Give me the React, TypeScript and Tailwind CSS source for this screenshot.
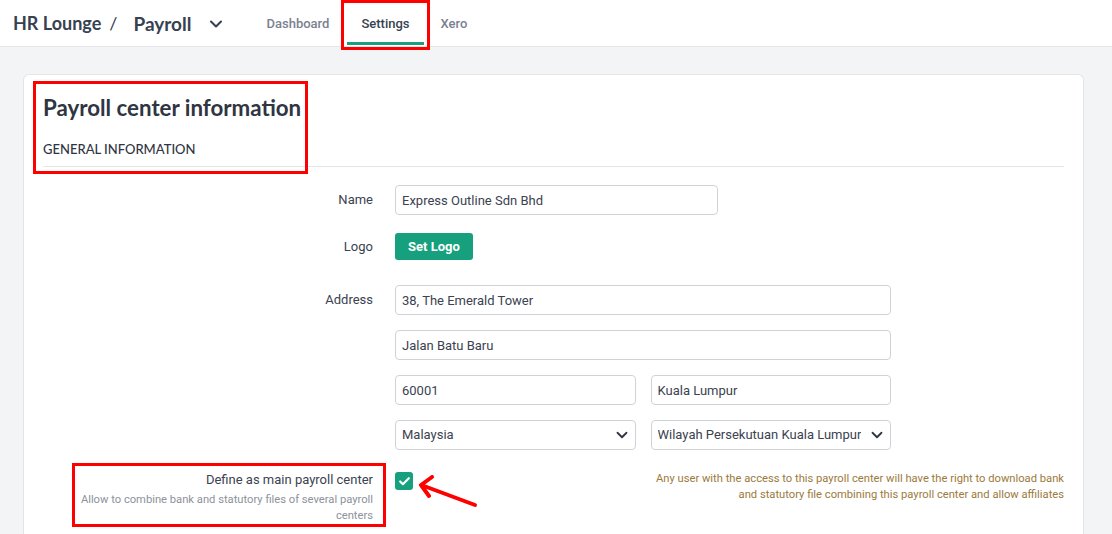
import { ChevronDown, Check } from "lucide-react";

const inputCls =
  "h-[30px] w-full rounded-[4px] border border-[#cfd3d8] bg-white px-[6px] text-[13px] text-[#3b4250] outline-none";

function Field({ value }: { value: string }) {
  return <input readOnly value={value} className={inputCls} />;
}

function Select({ value }: { value: string }) {
  return (
    <div className="flex h-[30px] w-full items-center justify-between rounded-[4px] border border-[#cfd3d8] bg-white pl-[6px] pr-[4px] text-[13px] text-[#3b4250]">
      <span className="truncate">{value}</span>
      <ChevronDown size={18} strokeWidth={2.4} className="shrink-0 text-[#2f3542]" />
    </div>
  );
}

export default function App() {
  return (
    <div
      className="relative h-[534px] w-[1112px] overflow-hidden bg-[#f3f4f6] text-[#3b4250]"
      style={{ fontFamily: "Roboto, 'Liberation Sans', sans-serif" }}
    >
      {/* top bar */}
      <div className="flex h-[47px] items-center border-b border-[#e3e5e8] bg-white pl-[13px]">
        <div className="flex items-center font-['Lato',sans-serif] text-[18px] font-bold text-[#374151]">
          <span>HR Lounge</span>
          <span className="ml-[8px] font-normal">/</span>
          <span className="ml-[16px] mt-[3px] text-[19px]">Payroll</span>
          <ChevronDown size={20} strokeWidth={2.5} className="ml-[15px] mt-[2px] text-[#374151]" />
        </div>
        <nav className="ml-[34px] flex h-full items-stretch text-[13px] font-medium">
          <div className="flex items-center px-[6px] pt-[1px] text-[#7b8190]">Dashboard</div>
          <div className="relative ml-[12px] flex items-center px-[14px] pt-[1px] text-[#374151]">
            Settings
            <span className="absolute bottom-[1px] left-0 right-0 h-[3px] bg-[#17a07e]" />
          </div>
          <div className="ml-[3px] flex items-center px-[14px] pt-[1px] text-[#7b8190]">Xero</div>
        </nav>
      </div>

      {/* card */}
      <div className="ml-[23px] mt-[27px] h-[520px] w-[1061px] rounded-t-[6px] border border-b-0 border-[#e3e5e8] bg-white px-[19px] pt-[19px]">
        <h1 className="font-['Lato',sans-serif] text-[22.3px] font-bold leading-[28px] text-[#2f3542]">
          Payroll center information
        </h1>
        <h2 className="mt-[18px] font-['Lato',sans-serif] text-[13px] font-medium leading-[18px] text-[#2f3542]">
          GENERAL INFORMATION
        </h2>
        <div className="mt-[8px] h-px bg-[#e3e5e8]" />

        <div className="mt-[18px] flex flex-col">
          <div className="flex items-center">
            <label className="w-[330px] text-right text-[13px] text-[#3b4250]">Name</label>
            <div className="ml-[22px] w-[323px]">
              <Field value="Express Outline Sdn Bhd" />
            </div>
          </div>

          <div className="mt-[18px] flex items-center">
            <label className="w-[330px] text-right text-[13px] text-[#3b4250]">Logo</label>
            <button className="ml-[22px] h-[27px] rounded-[3px] bg-[#17a07e] px-[13px] text-[13px] font-bold text-white">
              Set Logo
            </button>
          </div>

          <div className="mt-[25px] flex items-start">
            <label className="w-[330px] pt-[5px] text-right text-[13px] text-[#3b4250]">Address</label>
            <div className="ml-[22px] flex w-[496px] flex-col gap-[15px]">
              <Field value="38, The Emerald Tower" />
              <Field value="Jalan Batu Baru" />
              <div className="grid grid-cols-2 gap-[15px]">
                <Field value="60001" />
                <Field value="Kuala Lumpur" />
              </div>
              <div className="grid grid-cols-2 gap-[15px]">
                <Select value="Malaysia" />
                <Select value="Wilayah Persekutuan Kuala Lumpur" />
              </div>
            </div>
          </div>

          <div className="mt-[21px] flex items-start">
            <div className="w-[330px] text-right">
              <div className="text-[13px] leading-[18px] text-[#3b4250]">Define as main payroll center</div>
              <div className="mt-[3px] pl-[30px] text-[11.2px] leading-[16px] text-[#8d929b]">
                Allow to combine bank and statutory files of several payroll centers
              </div>
            </div>
            <div className="ml-[22px] mt-[1px] flex h-[18px] w-[18px] items-center justify-center rounded-[3px] bg-[#17a07e]">
              <Check size={13} strokeWidth={4} className="text-white" />
            </div>
            <div className="flex-1 pl-[230px] text-right text-[11.2px] leading-[16px] text-[#9b7a3c]">
              Any user with the access to this payroll center will have the right to download bank and
              statutory file combining this payroll center and allow affiliates
            </div>
          </div>
        </div>
      </div>

      {/* annotation overlays */}
      <div className="pointer-events-none absolute left-[341px] top-0 h-[50px] w-[89px] border-[3px] border-[#ff0000]" />
      <div className="pointer-events-none absolute left-[33px] top-[81px] h-[93px] w-[275px] border-[3px] border-[#ff0000]" />
      <div className="pointer-events-none absolute left-[72px] top-[463px] h-[64px] w-[314px] border-[3px] border-[#ff0000]" />
      <svg className="pointer-events-none absolute left-[415px] top-[475px]" width="70" height="40" viewBox="0 0 70 40">
        <line x1="60" y1="30" x2="9" y2="11" stroke="#ff0000" strokeWidth="4" strokeLinecap="round" />
        <polyline points="17,2 6,10 14,21" fill="none" stroke="#ff0000" strokeWidth="4" strokeLinecap="round" strokeLinejoin="round" />
      </svg>
    </div>
  );
}
